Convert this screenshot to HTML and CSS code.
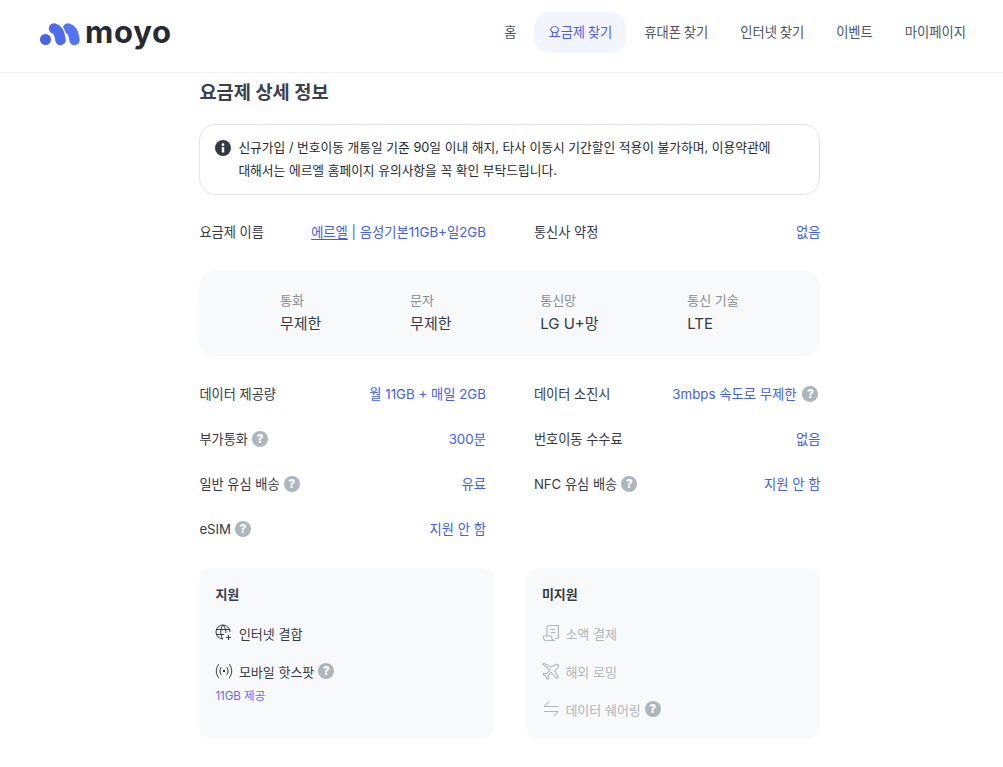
FILE: index.html
```html
<!DOCTYPE html>
<html lang="ko">
<head>
<meta charset="utf-8">
<title>moyo</title>
<link rel="stylesheet" href="styles.css">
</head>
<body>
<header class="header">
  <a class="logo">
    <svg class="logo-mark" width="40" height="24" viewBox="0 0 40 24" fill="none" stroke-linecap="round">
      <circle cx="5.500" cy="17.500" r="5.500" fill="#4a63e0"/>
      <path d="M28 6.500C32 7.500 34 13 34.500 18" stroke="#5673f4" stroke-width="10.500"/>
      <path d="M14 6.500C18 7.500 20 13 20.500 18" stroke="#fff" stroke-width="13"/>
      <path d="M14 6.500C18 7.500 20 13 20.500 18" stroke="#4f6bea" stroke-width="10.500"/>
    </svg>
    <span class="logo-text">moyo</span>
  </a>
  <nav class="nav">
    <a class="nav-item">홈</a>
    <a class="nav-item nav-active">요금제 찾기</a>
    <a class="nav-item">휴대폰 찾기</a>
    <a class="nav-item">인터넷 찾기</a>
    <a class="nav-item">이벤트</a>
    <a class="nav-item">마이페이지</a>
  </nav>
</header>
<main class="main">
  <h1 class="title">요금제 상세 정보</h1>
  <div class="notice">
    <svg class="notice-icon" width="16" height="16" viewBox="0 0 16 16"><circle cx="8" cy="8" r="8" fill="#333a45"/><rect x="6.800" y="7" width="2.400" height="5.500" rx=".6" fill="#fff"/><circle cx="8" cy="4.700" r="1.400" fill="#fff"/></svg>
    <p class="notice-text">신규가입 / 번호이동 개통일 기준 90일 이내 해지, 타사 이동시 기간할인 적용이 불가하며, 이용약관에<br>대해서는 에르엘 홈페이지 유의사항을 꼭 확인 부탁드립니다.</p>
  </div>
  <div class="grid grid-top">
    <div class="row"><span class="key">요금제 이름</span><span class="val"><span><u>에르엘</u> | 음성기본11GB+일2GB</span></span></div>
    <div class="row"><span class="key">통신사 약정</span><span class="val">없음</span></div>
  </div>
  <div class="stats">
    <div class="stat"><span class="stat-label">통화</span><span class="stat-value">무제한</span></div>
    <div class="stat"><span class="stat-label">문자</span><span class="stat-value">무제한</span></div>
    <div class="stat"><span class="stat-label">통신망</span><span class="stat-value">LG U+망</span></div>
    <div class="stat"><span class="stat-label">통신 기술</span><span class="stat-value">LTE</span></div>
  </div>
  <div class="grid grid-main">
    <div class="row"><span class="key">데이터 제공량</span><span class="val">월 11GB + 매일 2GB</span></div>
    <div class="row"><span class="key">데이터 소진시</span><span class="val">3mbps 속도로 무제한<i class="help help-val">?</i></span></div>
    <div class="row"><span class="key">부가통화<i class="help">?</i></span><span class="val">300분</span></div>
    <div class="row"><span class="key">번호이동 수수료</span><span class="val">없음</span></div>
    <div class="row"><span class="key">일반 유심 배송<i class="help">?</i></span><span class="val">유료</span></div>
    <div class="row"><span class="key">NFC 유심 배송<i class="help">?</i></span><span class="val">지원 안 함</span></div>
    <div class="row"><span class="key">eSIM<i class="help">?</i></span><span class="val">지원 안 함</span></div>
  </div>
  <div class="cards">
    <section class="card">
      <h2 class="card-title">지원</h2>
      <div class="feat feat-first">
        <svg class="ico" width="18" height="18" viewBox="0 0 18 18" fill="none" stroke="#333a45" stroke-width="1"><path d="M8 15A7 7 0 1 1 15 8M1 5.500h14M1 10.500h8M8 1C5 4 5 12 8 15M8 1c2.500 2.500 3 5.500 2.800 8M13.500 11v5M11 13.500h5"/></svg>
        <span>인터넷 결합</span>
      </div>
      <div class="feat">
        <svg class="ico" width="18" height="18" viewBox="0 0 18 18" fill="none" stroke="#333a45" stroke-width="1" stroke-linecap="round"><path d="M3.500 2.500C.5 6.500.5 11.500 3.500 15.500M6 5.500C4.500 7.500 4.500 10.500 6 12.500M14.500 2.500c3 4 3 9 0 13M12 5.500c1.500 2 1.500 5 0 7"/><circle cx="9" cy="9" r="1.200" fill="#333a45" stroke="none"/></svg>
        <span>모바일 핫스팟</span><i class="help">?</i>
      </div>
      <p class="feat-note">11GB 제공</p>
    </section>
    <section class="card">
      <h2 class="card-title">미지원</h2>
      <div class="feat feat-first feat-off">
        <svg class="ico" width="18" height="18" viewBox="0 0 18 18" fill="none" stroke="#adb5bd" stroke-width="1.100" stroke-linejoin="round"><path d="M5 12V3.500A2 2 0 0 1 7 1.500h9.500v11a2 2 0 0 1-2 2H13M8.500 5.500h5M8.500 8.500h5M1.500 12h8c0 2.500 1 4.500 3 4.500H4c-2 0-3-2.500-2.500-4.500Z"/></svg>
        <span>소액 결제</span>
      </div>
      <div class="feat feat-off">
        <svg class="ico" width="18" height="18" viewBox="0 0 18 18" fill="none" stroke="#adb5bd" stroke-width="1.100" stroke-linejoin="round"><path d="M1 1.500h1.500L9 5l5-2.500c2-.8 3.200.5 2.300 2.300L13 9l3 6.500-1.500 1L9.500 10.500 6 13.500l.5 3-1.200.6L3.500 14 1 12.500l.6-1.200 3 .4 3.300-3.500L1 2.500Z"/></svg>
        <span>해외 로밍</span>
      </div>
      <div class="feat feat-off">
        <svg class="ico" width="18" height="18" viewBox="0 0 18 18" fill="none" stroke="#adb5bd" stroke-width="1.100" stroke-linecap="round" stroke-linejoin="round"><path d="M16 6.500H2.500L6.500 2M2.500 11.500H16L12 16"/></svg>
        <span>데이터 쉐어링</span><i class="help">?</i>
      </div>
    </section>
  </div>
</main>
</body>
</html>
```
FILE: styles.css
```css
* { box-sizing: border-box; }
html, body { margin: 0; padding: 0; }
body {
  background: #fff;
  color: #333a45;
  font-family: "Inter", "Noto Sans CJK KR", sans-serif;
  font-size: 13.300px;
  overflow: hidden;
}
.header {
  height: 73px;
  display: flex;
  align-items: flex-start;
  justify-content: space-between;
  padding: 12px 23px 0 40px;
  border-bottom: 1px solid #f1f3f5;
}
.logo { display: flex; align-items: center; height: 43px; gap: 5px; }
.logo-text {
  font-family: "Inter", sans-serif;
  font-weight: 700;
  font-size: 31px;
  letter-spacing: .7px;
  color: #262b33;
  line-height: 43px;
  position: relative;
  top: -2px;
}
.nav { display: flex; gap: 4px; }
.nav-item {
  height: 41px;
  padding: 0 14px;
  line-height: 40px;
  border-radius: 16px;
  color: #4b5563;
  font-size: 13.300px;
  word-spacing: -1px;
}
.nav-active { background: #f2f5ff; color: #4b62de; }
.main { width: 621px; margin-left: 199.400px; }
.title {
  margin: 0;
  height: 51px;
  padding-top: 6px;
  font-size: 18.700px;
  line-height: 28px;
  font-weight: 700;
  color: #3a414c;
}
.notice {
  height: 71px;
  display: flex;
  gap: 7px;
  padding: 11px 15px;
  border: 1px solid #e1e4e8;
  border-radius: 16px;
}
.notice-icon { flex: none; margin-top: 4px; }
.notice-text { margin: 0; font-size: 12.750px; line-height: 23px; color: #262b33; }
.grid {
  display: grid;
  grid-template-columns: 286.500px 286.500px;
  column-gap: 48px;
}
.grid-top { margin-top: 26px; height: 50px; }
.grid-main { margin-top: 27px; row-gap: 23px; }
.row {
  height: 22px;
  display: flex;
  align-items: center;
  justify-content: space-between;
  line-height: 22px;
  white-space: nowrap;
}
.key { display: flex; align-items: center; color: #333a45; font-size: 13.200px; }
.val { display: flex; align-items: center; gap: 3px; color: #4560dc; font-size: 13.300px; }
.val u { text-underline-offset: 2px; }
.help {
  flex: none;
  width: 16px;
  height: 16px;
  margin-left: 4px;
  border-radius: 50%;
  background: #adb5bd;
  color: #fff;
  font-size: 12px;
  font-weight: 800;
  font-style: normal;
  line-height: 16px;
  text-align: center;
}
.help-val { margin-left: 3px; margin-right: 2px; }
.stats {
  height: 85px;
  display: flex;
  justify-content: center;
  gap: 88.700px;
  padding: 18px 1px 0 0;
  background: #f8f9fa;
  border-radius: 16px;
}
.stat { display: flex; flex-direction: column; }
.stat-label { font-size: 13px; line-height: 22px; color: #868e96; }
.stat-value { font-size: 15px; line-height: 25px; color: #333a45; }
.cards {
  margin-top: 28px;
  display: grid;
  grid-template-columns: 294.500px 294.500px;
  column-gap: 32px;
}
.card {
  height: 170px;
  padding: 16px;
  background: #f8f9fa;
  border-radius: 12px;
}
.card-title { margin: 0; font-size: 13px; font-weight: 700; line-height: 20px; color: #333a45; }
.feat { height: 20px; display: flex; align-items: center; margin-top: 18px; font-size: 13px; }
.feat-first { margin-top: 19px; }
.ico { flex: none; margin-right: 5.500px; }
.feat-off { color: #adb5bd; }
.feat-note { margin: 7px 0 0; font-size: 11.500px; line-height: 16px; color: #5b6cf0; }
```
